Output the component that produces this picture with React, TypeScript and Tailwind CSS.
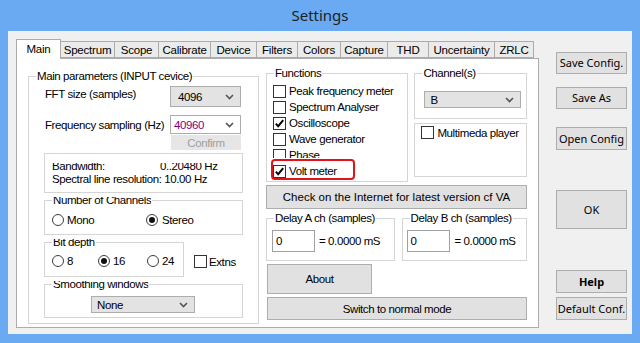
import React from "react"
import { clsx } from "clsx"

const TABS = [
  { label: "Main", w: "w-[45px]" },
  { label: "Spectrum", w: "w-[54px]" },
  { label: "Scope", w: "w-[44px]" },
  { label: "Calibrate", w: "w-[52px]" },
  { label: "Device", w: "w-[46px]" },
  { label: "Filters", w: "w-[41px]" },
  { label: "Colors", w: "w-[43px]" },
  { label: "Capture", w: "w-[47px]" },
  { label: "THD", w: "w-[41px]" },
  { label: "Uncertainty", w: "w-[66px]" },
  { label: "ZRLC", w: "w-[39px]" },
]

const FUNCTIONS = [
  { label: "Peak frequency meter", on: false },
  { label: "Spectrum Analyser", on: false },
  { label: "Oscilloscope", on: true },
  { label: "Wave generator", on: false },
]

function Check({ on }: { on?: boolean }) {
  return (
    <span className="flex h-[13px] w-[13px] shrink-0 items-center justify-center border border-[#333] bg-white">
      {on && (
        <svg width="11" height="11" viewBox="0 0 11 11">
          <path d="M1.8 5.6 L4.2 8.2 L9.2 2.2" fill="none" stroke="#000" strokeWidth="1.9" />
        </svg>
      )}
    </span>
  )
}

function Radio({ on }: { on?: boolean }) {
  return (
    <span className="flex h-[12px] w-[12px] shrink-0 items-center justify-center rounded-full border border-[#3c3c3c] bg-white">
      {on && <span className="h-[6px] w-[6px] rounded-full bg-[#111]" />}
    </span>
  )
}

function Chevron() {
  return (
    <svg width="9" height="6" viewBox="0 0 9 6" className="shrink-0">
      <polyline points="1,1 4.5,4.5 8,1" fill="none" stroke="#555" strokeWidth="1.6" />
    </svg>
  )
}

// windows group box; some labels are clipped at the top like the original
function Group({
  label,
  clip,
  className,
  inner,
  children,
}: {
  label?: string
  clip?: boolean
  className?: string
  inner?: string
  children?: React.ReactNode
}) {
  return (
    <fieldset className={clsx("min-w-0 border border-[#d5d5d5]", className)}>
      {label && (
        <legend className="ml-[7px] px-[1px] leading-[12px]">
          {clip ? <span className="block [clip-path:inset(3px_0_0_0)]">{label}</span> : label}
        </legend>
      )}
      <div className={inner}>{children}</div>
    </fieldset>
  )
}

function Button({ className, children }: { className?: string; children: React.ReactNode }) {
  return (
    <div className={clsx("flex items-center justify-center border border-[#adadad] bg-[#e1e1e1]", className)}>
      {children}
    </div>
  )
}

function Select({ value, className }: { value: string; className?: string }) {
  return (
    <div className={clsx("flex items-center justify-between border border-[#adadad] bg-[#e3e3e3] pr-[6px]", className)}>
      <span>{value}</span>
      <Chevron />
    </div>
  )
}

export default function App() {
  return (
    <div className="flex h-[343px] w-[640px] flex-col overflow-hidden whitespace-nowrap bg-[#69aaf2]">
      <div className="flex h-[31px] items-center justify-center font-['Noto_Sans',sans-serif] text-[15px] text-[#1e1e1e]">
        Settings
      </div>

      <div className="mx-[8px] flex h-[303px] items-start bg-[#f0f0f0] font-['Liberation_Sans',Arial,sans-serif] text-[11.5px] leading-[12px] tracking-[-0.4px] text-black">
        {/* tab control */}
        <div className="ml-[8px] mt-[8px] flex w-[523px] flex-col">
          <div className="flex h-[19px] items-end tracking-[-0.2px]">
            {TABS.map((t, i) =>
              i === 0 ? (
                <div
                  key={t.label}
                  className={clsx("relative z-10 -mb-px flex h-[20px] items-center justify-center border border-b-0 border-[#acacac] bg-white pb-[2px]", t.w)}
                >
                  {t.label}
                </div>
              ) : (
                <div
                  key={t.label}
                  className={clsx("flex h-[17px] items-center justify-center border-y border-r border-[#acacac] bg-[#ebebeb]", t.w)}
                >
                  {t.label}
                </div>
              )
            )}
          </div>

          <div className="flex h-[270px] items-start border border-[#acacac] bg-white pl-[11px]">
            {/* main parameters */}
            <Group label="Main parameters (INPUT cevice)" className="mt-[11px] h-[254px] w-[231px]" inner="pl-[15px]">
              <div className="mt-[4px] flex h-[21px] items-start">
                <span className="w-[126px] pl-[1px] pt-[2px]">FFT size (samples)</span>
                <Select value="4096" className="h-[21px] w-[71px] pl-[7px]" />
              </div>
              <div className="mt-[8px] flex h-[19px] items-center">
                <span className="w-[126px] pl-[1px]">Frequency sampling (Hz)</span>
                <div className="flex h-[19px] w-[71px] items-center justify-between border border-[#adadad] bg-white pl-[3px] pr-[6px]">
                  <span className="text-[#800080]">40960</span>
                  <Chevron />
                </div>
              </div>
              <div className="ml-[127px] mt-[1px] flex h-[15px] w-[70px] items-center justify-center bg-[#e6e6e6] text-[#a0a0a0]">
                Confirm
              </div>
              <div className="mt-[3px] h-[40px] w-[199px] border border-[#d5d5d5] pl-[7px] pt-[6px]">
                <div className="flex [clip-path:inset(3px_0_0_0)]">
                  <span className="w-[108px]">Bandwidth:</span>
                  <span>0..20480 Hz</span>
                </div>
                <div className="mt-px [clip-path:inset(2px_0_0_0)]">Spectral line resolution: 10.00 Hz</div>
              </div>

              <Group label="Number of Channels" clip className="mt-[1px] h-[41px] w-[199px]" inner="pl-[7px]">
                <div className="mt-[8px] flex h-[12px] items-center">
                  <span className="flex w-[94px] items-center gap-[3px]">
                    <Radio />
                    Mono
                  </span>
                  <span className="flex items-center gap-[4px]">
                    <Radio on />
                    Stereo
                  </span>
                </div>
              </Group>

              <div className="mt-[1px] flex items-start">
                <Group label="Bit depth" clip className="h-[41px] w-[140px]" inner="pl-[7px]">
                  <div className="mt-[7px] flex h-[12px] items-center">
                    <span className="flex w-[46px] items-center gap-[3px]">
                      <Radio />8
                    </span>
                    <span className="flex w-[49px] items-center gap-[3px]">
                      <Radio on />
                      16
                    </span>
                    <span className="flex items-center gap-[3px]">
                      <Radio />
                      24
                    </span>
                  </div>
                </Group>
                <div className="ml-[10px] mt-[19px] flex items-center gap-[2px]">
                  <Check />
                  Extns
                </div>
              </div>

              <Group label="Smoothing windows" clip className="mt-[1px] h-[40px] w-[199px]">
                <Select value="None" className="ml-[46px] mt-[6px] h-[17px] w-[104px] pl-[5px]" />
              </Group>
            </Group>

            {/* right side of page */}
            <div className="ml-[7px] flex w-[261px] flex-col">
              <div className="mt-[8px] flex items-start">
                <Group label="Functions" className="h-[115px] w-[143px]" inner="mt-[4px] flex flex-col pl-[6px]">
                  {FUNCTIONS.map((f) => (
                    <div key={f.label} className="flex h-[16px] items-center gap-[3px]">
                      <Check on={f.on} />
                      {f.label}
                    </div>
                  ))}
                  <div className="h-[11px] overflow-hidden">
                    <div className="flex h-[16px] items-center gap-[3px]">
                      <Check />
                      Phase
                    </div>
                  </div>
                  <div className="relative mt-[5px] flex h-[16px] items-center gap-[3px]">
                    <Check on />
                    Volt meter
                    <span className="absolute -left-[2px] -top-[4px] h-[21px] w-[84px] rounded-[4px] border-2 border-[#e3131b]" />
                  </div>
                </Group>

                <div className="ml-[6px] flex w-[113px] flex-col">
                  <Group label="Channel(s)" className="h-[52px]">
                    <Select value="B" className="ml-[9px] mt-[12px] h-[17px] w-[97px] pl-[5px]" />
                  </Group>
                  <Group className="mt-[4px] h-[54px]" inner="flex h-full items-center pl-[6px] pt-[2px]">
                    <div className="flex items-center gap-[3px]">
                      <Check />
                      Multimeda player
                    </div>
                  </Group>
                </div>
              </div>

              <Button className="mt-[3px] h-[24px] w-[261px] tracking-normal">Check on the Internet for latest version cf VA</Button>

              <div className="mt-[3px] flex items-start">
                <Group label="Delay A ch (samples)" className="h-[49px] w-[129px]" inner="ml-[5px] mt-[6px] flex items-center">
                  <div className="flex h-[22px] w-[43px] items-center border border-[#a0a0a0] bg-white pl-[3px]">0</div>
                  <span className="ml-[4px]">= 0.0000 mS</span>
                </Group>
                <Group label="Delay B ch (samples)" className="ml-[7px] h-[49px] w-[126px]" inner="ml-[4px] mt-[6px] flex items-center">
                  <div className="flex h-[22px] w-[43px] items-center border border-[#a0a0a0] bg-white pl-[3px]">0</div>
                  <span className="ml-[5px]">= 0.0000 mS</span>
                </Group>
              </div>

              <Button className="ml-px mt-[3px] h-[30px] w-[105px]">About</Button>
              <Button className="ml-px mt-[3px] h-[23px] w-[260px]">Switch to normal mode</Button>
            </div>
          </div>
        </div>

        {/* side buttons */}
        <div className="ml-[17px] mt-[21px] flex w-[71px] flex-col font-['Noto_Sans',sans-serif] text-[11px] leading-[14px] tracking-normal text-black">
          <Button className="h-[22px]">Save Config.</Button>
          <Button className="mt-[13px] h-[22px]">Save As</Button>
          <Button className="mt-[18px] h-[23px]">Open Config</Button>
          <Button className="mt-[40px] h-[39px]">OK</Button>
          <Button className="mt-[41px] h-[23px] font-bold">Help</Button>
          <Button className="mt-[4px] h-[23px]">Default Conf.</Button>
        </div>
      </div>
    </div>
  )
}
